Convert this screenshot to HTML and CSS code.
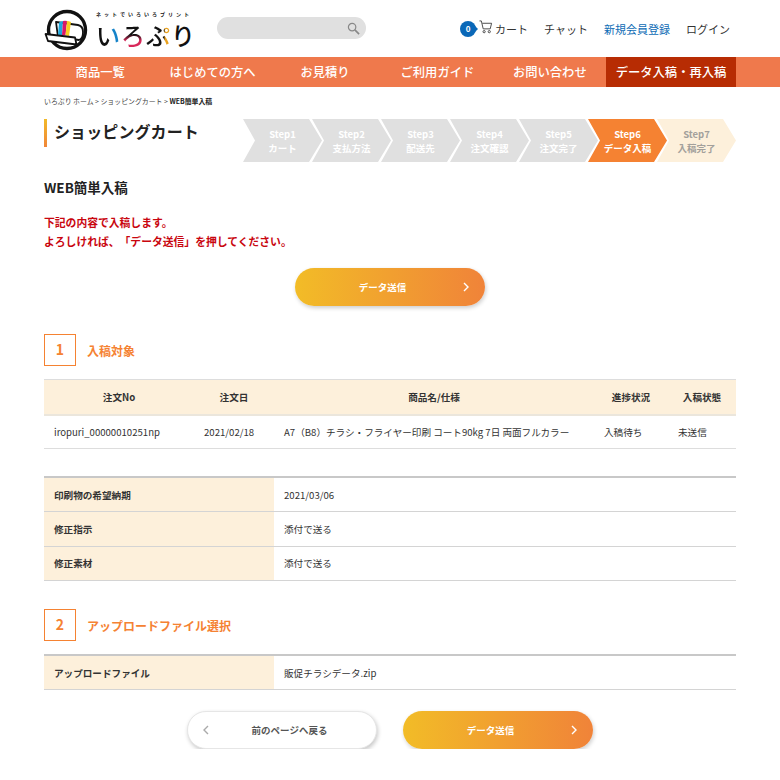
FILE: index.html
```html
<!DOCTYPE html>
<html lang="ja">
<head>
<meta charset="utf-8">
<title>WEB簡単入稿</title>
<link rel="stylesheet" href="styles.css">
</head>
<body>
<header class="header">
  <a class="logo">
    <svg class="logo-mark" viewBox="0 0 44 42" width="44" height="42">
      <circle cx="23" cy="21" r="18.500" fill="#fff" stroke="#111" stroke-width="3.400"/>
      <path d="M12 13L34 16Q39 17 39 23Q39 30 35 31L14 28Z" fill="#fff" stroke="#111" stroke-width="1.800" stroke-linejoin="round"/>
      <path d="M15 13.500Q17 12 19 12L18 26L14 26Z" fill="#1ea7dc"/>
      <path d="M19 12Q21 11.500 23 12L21.500 26.500L18 26Z" fill="#d8176b"/>
      <path d="M23 12Q25 12 27 13L25 27L21.500 26.500Z" fill="#f6cf22"/>
      <path d="M1.500 25L31 28.500L32.500 35.500L4 32Z" fill="#fff" stroke="#111" stroke-width="1.800" stroke-linejoin="round"/>
    </svg>
    <span class="logo-text">
      <span class="logo-sub">ネットでいろいろプリント</span>
      <span class="logo-main"><span class="logo-i">い</span><span class="logo-ro">ろ</span><span class="logo-pu">ぷ</span>り</span>
    </span>
  </a>
  <div class="search">
    <svg viewBox="0 0 14 14" width="13" height="13"><circle cx="5.500" cy="5.500" r="4" fill="none" stroke="#888" stroke-width="1.300"/><path d="M8.500 8.500l4.500 4.500" stroke="#888" stroke-width="1.800"/></svg>
  </div>
  <nav class="util">
    <a class="util-cart">
      <span class="badge">0</span>
      <svg viewBox="0 0 15 15" width="14" height="14"><path d="M.5 1h2l2 8.500h7.500l1.500-6H3.500" fill="none" stroke="#444" stroke-width="1"/><circle cx="5.500" cy="12.500" r="1.200" fill="none" stroke="#444"/><circle cx="11" cy="12.500" r="1.200" fill="none" stroke="#444"/></svg>
      <span>カート</span>
    </a>
    <a>チャット</a>
    <a class="util-blue">新規会員登録</a>
    <a>ログイン</a>
  </nav>
</header>

<nav class="gnav">
  <a>商品一覧</a>
  <a>はじめての方へ</a>
  <a>お見積り</a>
  <a>ご利用ガイド</a>
  <a>お問い合わせ</a>
  <a class="gnav-active">データ入稿・再入稿</a>
</nav>

<main class="main">
  <p class="crumbs">いろぷり ホーム &gt; ショッピングカート &gt; <b>WEB簡単入稿</b></p>

  <div class="title-row">
    <h1 class="page-title">ショッピングカート</h1>
    <ol class="steps">
      <li>Step1<br>カート</li>
      <li>Step2<br>支払方法</li>
      <li>Step3<br>配送先</li>
      <li>Step4<br>注文確認</li>
      <li>Step5<br>注文完了</li>
      <li class="step-now">Step6<br>データ入稿</li>
      <li class="step-next">Step7<br>入稿完了</li>
    </ol>
  </div>

  <h2 class="sub-title">WEB簡単入稿</h2>
  <p class="notice">下記の内容で入稿します。<br>よろしければ、「データ送信」を押してください。</p>

  <div class="btn-row btn-row-top">
    <a class="btn btn-send">データ送信<svg class="chev-r" viewBox="0 0 6 10" width="6" height="10"><path d="M1 1l4 4-4 4" fill="none" stroke="#fff" stroke-width="1.400"/></svg></a>
  </div>

  <div class="section-head section-one"><span class="num">1</span><h3>入稿対象</h3></div>
  <table class="tbl tbl-order">
    <colgroup><col class="c1"><col class="c2"><col class="c3"><col class="c4"><col class="c5"></colgroup>
    <thead><tr><th>注文No</th><th>注文日</th><th>商品名/仕様</th><th>進捗状況</th><th>入稿状態</th></tr></thead>
    <tbody><tr><td>iropuri_00000010251np</td><td>2021/02/18</td><td>A7（B8）チラシ・フライヤー印刷 コート90kg 7日 両面フルカラー</td><td>入稿待ち</td><td>未送信</td></tr></tbody>
  </table>

  <table class="tbl tbl-side tbl-detail">
    <tr><th>印刷物の希望納期</th><td>2021/03/06</td></tr>
    <tr><th>修正指示</th><td>添付で送る</td></tr>
    <tr><th>修正素材</th><td>添付で送る</td></tr>
  </table>

  <div class="section-head section-two"><span class="num">2</span><h3>アップロードファイル選択</h3></div>
  <table class="tbl tbl-side tbl-upload">
    <tr><th>アップロードファイル</th><td>販促チラシデータ.zip</td></tr>
  </table>

  <div class="btn-row btn-row-bottom">
    <a class="btn btn-back"><svg class="chev-l" viewBox="0 0 6 10" width="6" height="10"><path d="M5 1L1 5l4 4" fill="none" stroke="#aaa" stroke-width="1.400"/></svg>前のページへ戻る</a>
    <a class="btn btn-send">データ送信<svg class="chev-r" viewBox="0 0 6 10" width="6" height="10"><path d="M1 1l4 4-4 4" fill="none" stroke="#fff" stroke-width="1.400"/></svg></a>
  </div>
</main>
</body>
</html>
```
FILE: styles.css
```css
* { box-sizing: border-box; }
html, body { margin: 0; padding: 0; }
body {
  width: 780px;
  background: #fff;
  color: #333;
  font-family: "Noto Sans CJK JP", "Noto Sans", sans-serif;
  font-size: 10.5px;
  overflow-x: hidden;
  text-spacing-trim: space-all;
}
.header {
  height: 57px;
  padding: 0 50px 0 44px;
  display: flex;
  align-items: center;
  position: relative;
}
.logo { display: flex; align-items: flex-start; width: 173px; height: 48px; padding-top: 4px; }
.logo-mark { flex: none; }
.logo-text { display: flex; flex-direction: column; margin-left: 8px; color: #111; }
.logo-sub { font-size: 5px; line-height: 8px; font-weight: 700; letter-spacing: 3px; margin-top: 1px; white-space: nowrap; }
.logo-main { font-size: 24px; line-height: 28px; letter-spacing: 1px; font-weight: 500; white-space: nowrap; margin-top: 3px; }
.logo-i, .logo-ro, .logo-pu {
  -webkit-background-clip: text;
  background-clip: text;
  color: transparent;
}
.logo-i { background-image: linear-gradient(90deg, #111 55%, #1583c9 60%); }
.logo-ro { background-image: linear-gradient(#111 50%, #d8285a 68%); }
.logo-pu { background-image: linear-gradient(90deg, #111 72%, #e9a11d 76%); }
.search {
  width: 149px;
  height: 22px;
  margin-bottom: 1px;
  border-radius: 11px;
  background: #e0e0e0;
  display: flex;
  align-items: center;
  justify-content: flex-end;
  padding-right: 6px;
}
.util {
  margin-left: auto;
  display: flex;
  align-items: center;
  gap: 16px;
  font-size: 11px;
  color: #333;
  white-space: nowrap;
}
.util-cart { display: flex; align-items: center; }
.util-cart svg { margin: -3px 2px 0 3px; }
.util-blue { color: #0d6bb5; }
.badge {
  position: relative;
  width: 16px;
  height: 16px;
  border-radius: 50%;
  background: #0a68b8;
  color: #fff;
  font-size: 8px;
  font-weight: 700;
  line-height: 16px;
  text-align: center;
}
.badge::after {
  content: "";
  position: absolute;
  right: -2px;
  top: 5px;
  border-left: 3px solid #0a68b8;
  border-top: 3px solid transparent;
  border-bottom: 3px solid transparent;
}
.gnav {
  height: 30px;
  padding: 0 44px;
  background: #ef794c;
  display: grid;
  grid-template-columns: repeat(5, 1fr) 130px;
  color: #fff;
  font-size: 12.300px;
  line-height: 30px;
  text-align: center;
  font-weight: 500;
}
.gnav-active { background: #b72c03; }
.main { padding: 0 44px; }
.crumbs { margin: 9px 0 0; height: 11px; font-size: 6.900px; line-height: 11px; color: #444; }
.crumbs b { color: #222; }
.title-row { display: flex; align-items: flex-start; justify-content: space-between; margin-top: 12px; }
.page-title {
  margin: 0;
  height: 28px;
  padding-left: 7px;
  border-left: 3px solid;
  border-image: linear-gradient(#f2bc27, #f08339) 1;
  font-size: 16px;
  line-height: 25px;
  font-weight: 700;
  color: #222;
  letter-spacing: 0.1px;
}
.steps { list-style: none; margin: 0; padding: 0; display: flex; }
.steps li {
  width: 79px;
  height: 43px;
  margin-left: -10px;
  padding-top: 8px;
  background: #e0e0e0;
  clip-path: polygon(0 0, calc(100% - 13px) 0, 100% 50%, calc(100% - 13px) 100%, 0 100%, 12px 50%);
  color: #fff;
  font-size: 9.500px;
  line-height: 14px;
  font-weight: 700;
  text-align: center;
}
.steps li:first-child { margin-left: 0; }
.steps .step-now { background: #f58232; }
.steps .step-next { background: #fdf0db; color: #a3a09b; }
.sub-title { margin: 15px 0 0; font-size: 13.500px; line-height: 20px; font-weight: 700; color: #222; }
.notice { margin: 16px 0 0; font-size: 10.800px; line-height: 19px; font-weight: 700; color: #c9060f; }
.btn-row { display: flex; justify-content: center; }
.btn-row-top { margin-top: 17px; }
.btn-row-bottom { margin-top: 21px; gap: 26px; }
.btn {
  position: relative;
  width: 190px;
  height: 38px;
  border-radius: 19px;
  font-size: 9.500px;
  font-weight: 700;
  line-height: 38px;
  text-align: center;
  display: block;
}
.btn-send {
  color: #fff;
  background: linear-gradient(90deg, #f2bc27, #f08339);
  box-shadow: 1px 2px 4px rgba(0, 0, 0, .2);
  padding-right: 15px;
}
.btn-back {
  color: #555;
  background: #fff;
  border: 1px solid #e6e6e6;
  box-shadow: 1px 2px 4px rgba(0, 0, 0, .22);
  line-height: 36px;
  padding-left: 15px;
}
.chev-r { position: absolute; right: 16px; top: 14px; }
.chev-l { position: absolute; left: 15px; top: 13px; }
.section-head { display: flex; align-items: center; gap: 11px; }
.section-one { margin-top: 28px; }
.section-two { margin-top: 28px; }
.section-head h3 { margin: 0; font-size: 12px; font-weight: 700; color: #f58232; }
.num {
  width: 32px;
  height: 32px;
  border: 1.5px solid #f58232;
  color: #f58232;
  font-size: 14px;
  font-weight: 700;
  line-height: 29px;
  text-align: center;
}
.tbl {
  width: 692px;
  border-collapse: collapse;
  table-layout: fixed;
  font-size: 9.600px;
}
.tbl th { font-weight: 700; background: #fdf0db; color: #333; }
.tbl td, .tbl th { padding: 0 10px; }
.tbl-order { margin-top: 13px; }
.c1 { width: 150px; }
.c2 { width: 80px; }
.c3 { width: 320px; }
.c4 { width: 74px; }
.c5 { width: 68px; }
.tbl-order th { height: 35px; text-align: center; border-top: 1px solid #ddd; border-bottom: 2px solid #ebe6dc; }
.tbl-order td { height: 34px; border-bottom: 1px solid #ddd; white-space: nowrap; }
.tbl-side { border-top: 2px solid #c8c8c8; }
.tbl-detail { margin-top: 27px; }
.tbl-side th { width: 230px; text-align: left; }
.tbl-side th, .tbl-side td { height: 34.500px; border-bottom: 1px solid #d4d4d4; }
.tbl-upload { margin-top: 13px; }
```
